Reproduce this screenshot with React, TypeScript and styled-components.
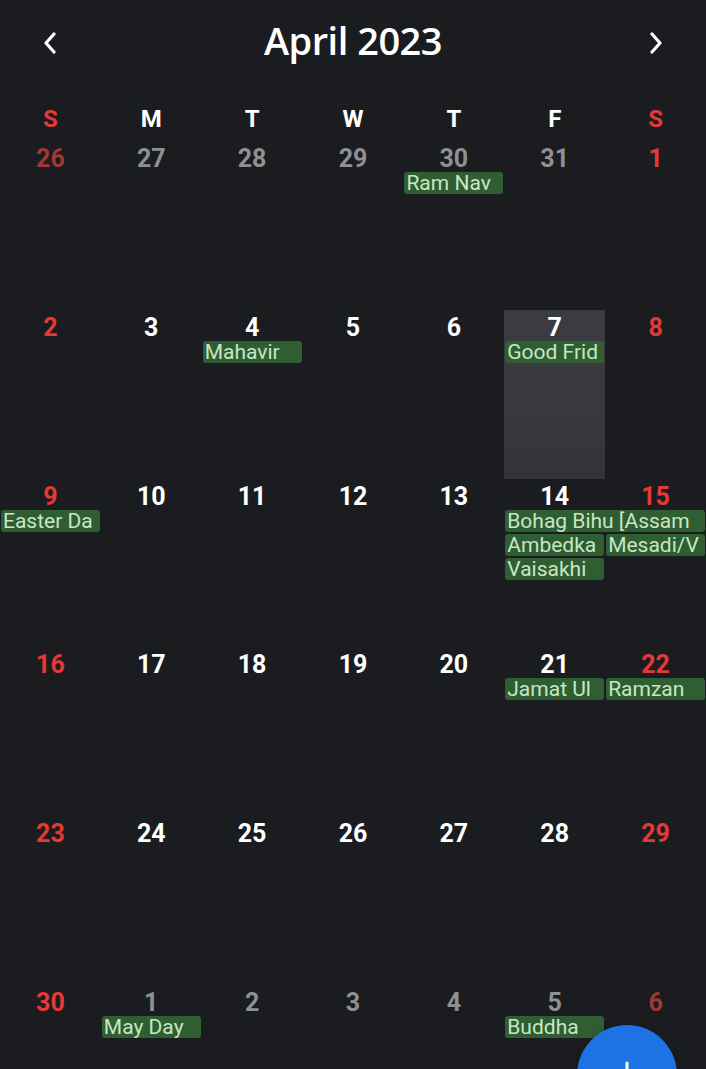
import React from "react";
import styled, { createGlobalStyle } from "styled-components";

const GlobalStyle = createGlobalStyle`
  html, body {
    margin: 0;
    padding: 0;
    background: #1b1c1f;
    overflow: hidden;
  }
  * { box-sizing: border-box; }
`;

type Tone = "cur" | "curWeekend" | "other" | "otherWeekend";

const toneColor: Record<Tone, string> = {
  cur: "#ffffff",
  curWeekend: "#e53935",
  other: "#8f9094",
  otherWeekend: "#a13733",
};

const Page = styled.div`
  position: relative;
  width: 706px;
  height: 1069px;
  overflow: hidden;
  background: #1b1c1f;
  font-family: Roboto, "Liberation Sans", sans-serif;
`;

const Header = styled.header`
  display: grid;
  grid-template-columns: repeat(7, 1fr);
  align-items: center;
  height: 86px;
`;

const NavButton = styled.button`
  justify-self: center;
  display: flex;
  align-items: center;
  justify-content: center;
  width: 40px;
  height: 40px;
  padding: 0;
  border: none;
  background: transparent;
  color: #ffffff;
  cursor: pointer;
`;

const Title = styled.h1`
  grid-column: 2 / 7;
  margin: 0;
  padding-bottom: 6px;
  text-align: center;
  font-family: "Open Sans", "Liberation Sans", sans-serif;
  font-weight: 600;
  font-size: 38px;
  line-height: 74px;
  color: #ffffff;
  letter-spacing: -0.5px;
`;

const WeekdayRow = styled.div`
  display: grid;
  grid-template-columns: repeat(7, 1fr);
  height: 56px;
  padding-top: 21px;
`;

const Weekday = styled.div<{ $weekend: boolean }>`
  text-align: center;
  font-weight: 700;
  font-size: 24px;
  line-height: 24px;
  color: ${(p) => (p.$weekend ? "#e53935" : "#ffffff")};
`;

const Week = styled.div`
  display: grid;
  grid-template-columns: repeat(7, 1fr);
  grid-template-rows: 28px repeat(5, 22px) 1fr;
  row-gap: 2px;
  height: 168.8px;
`;

const TodayBg = styled.div<{ $col: number }>`
  grid-column: ${(p) => p.$col + 1};
  grid-row: 1 / -1;
  margin-top: -1px;
  margin-bottom: 1px;
  background: linear-gradient(180deg, #3b3c40 0%, #38393c 60%, #333437 100%);
`;

const DayNumber = styled.div<{ $col: number; $tone: Tone }>`
  grid-column: ${(p) => p.$col + 1};
  grid-row: 1;
  padding-top: 5px;
  text-align: center;
  font-weight: 700;
  font-size: 25px;
  line-height: 23px;
  color: ${(p) => toneColor[p.$tone]};
`;

const Chip = styled.div<{ $col: number; $span: number; $slot: number }>`
  grid-column: ${(p) => `${p.$col + 1} / span ${p.$span}`};
  grid-row: ${(p) => p.$slot + 2};
  margin: 0 1px;
  height: 22px;
  padding: 0 2px;
  border-radius: 3px;
  background: #2e5e31;
  color: #c8e6c4;
  font-size: 21px;
  line-height: 23px;
  white-space: nowrap;
  overflow: hidden;
`;

const Fab = styled.button`
  position: absolute;
  left: 577px;
  top: 1025px;
  width: 100px;
  height: 100px;
  border-radius: 50%;
  border: none;
  padding: 0;
  background: #1d73e4;
  color: #ffffff;
  display: flex;
  align-items: center;
  justify-content: center;
  box-shadow: 0 2px 6px rgba(0, 0, 0, 0.35);
`;

type Day = { n: number; tone: Tone };
type Event = { label: string; col: number; span: number; slot: number };
type WeekData = { days: Day[]; events: Event[]; today?: number };

const mk = (nums: number[], month: ("p" | "c" | "n")[]): Day[] =>
  nums.map((n, i) => {
    const weekend = i === 0 || i === 6;
    const cur = month[i] === "c";
    const tone: Tone = cur
      ? weekend
        ? "curWeekend"
        : "cur"
      : weekend
      ? "otherWeekend"
      : "other";
    return { n, tone };
  });

const C7: ("c")[] = ["c", "c", "c", "c", "c", "c", "c"];

const weeks: WeekData[] = [
  {
    days: mk([26, 27, 28, 29, 30, 31, 1], ["p", "p", "p", "p", "p", "p", "c"]),
    events: [{ label: "Ram Nav", col: 4, span: 1, slot: 0 }],
  },
  {
    days: mk([2, 3, 4, 5, 6, 7, 8], C7),
    events: [
      { label: "Mahavir", col: 2, span: 1, slot: 0 },
      { label: "Good Frid", col: 5, span: 1, slot: 0 },
    ],
    today: 5,
  },
  {
    days: mk([9, 10, 11, 12, 13, 14, 15], C7),
    events: [
      { label: "Easter Da", col: 0, span: 1, slot: 0 },
      { label: "Bohag Bihu [Assam", col: 5, span: 2, slot: 0 },
      { label: "Ambedka", col: 5, span: 1, slot: 1 },
      { label: "Mesadi/V", col: 6, span: 1, slot: 1 },
      { label: "Vaisakhi", col: 5, span: 1, slot: 2 },
    ],
  },
  {
    days: mk([16, 17, 18, 19, 20, 21, 22], C7),
    events: [
      { label: "Jamat Ul", col: 5, span: 1, slot: 0 },
      { label: "Ramzan", col: 6, span: 1, slot: 0 },
    ],
  },
  {
    days: mk([23, 24, 25, 26, 27, 28, 29], C7),
    events: [],
  },
  {
    days: mk([30, 1, 2, 3, 4, 5, 6], ["c", "n", "n", "n", "n", "n", "n"]),
    events: [
      { label: "May Day", col: 1, span: 1, slot: 0 },
      { label: "Buddha", col: 5, span: 1, slot: 0 },
    ],
  },
];

const weekdays = ["S", "M", "T", "W", "T", "F", "S"];

const Chevron = ({ dir }: { dir: "left" | "right" }) => (
  <svg width="14" height="22" viewBox="0 0 14 22" fill="none">
    <path
      d={dir === "left" ? "M11 2 L3 11 L11 20" : "M3 2 L11 11 L3 20"}
      stroke="currentColor"
      strokeWidth="3.2"
      strokeLinecap="round"
      strokeLinejoin="round"
    />
  </svg>
);

export default function App() {
  return (
    <Page>
      <GlobalStyle />
      <Header>
        <NavButton aria-label="Previous month">
          <Chevron dir="left" />
        </NavButton>
        <Title>April 2023</Title>
        <NavButton aria-label="Next month">
          <Chevron dir="right" />
        </NavButton>
      </Header>
      <WeekdayRow>
        {weekdays.map((d, i) => (
          <Weekday key={i} $weekend={i === 0 || i === 6}>
            {d}
          </Weekday>
        ))}
      </WeekdayRow>
      {weeks.map((w, wi) => (
        <Week key={wi}>
          {w.today !== undefined && <TodayBg $col={w.today} />}
          {w.days.map((d, di) => (
            <DayNumber key={di} $col={di} $tone={d.tone}>
              {d.n}
            </DayNumber>
          ))}
          {w.events.map((e, ei) => (
            <Chip key={ei} $col={e.col} $span={e.span} $slot={e.slot}>
              {e.label}
            </Chip>
          ))}
        </Week>
      ))}
      <Fab aria-label="Add event">
        <svg width="30" height="30" viewBox="0 0 30 30" fill="none">
          <path d="M15 3 V27 M3 15 H27" stroke="currentColor" strokeWidth="3" strokeLinecap="round" />
        </svg>
      </Fab>
    </Page>
  );
}
